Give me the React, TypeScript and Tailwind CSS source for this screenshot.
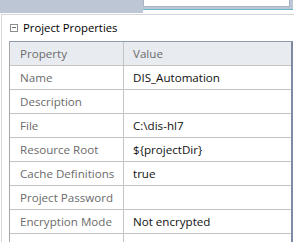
import React from "react";

const rows: [string, string][] = [
  ["Name", "DIS_Automation"],
  ["Description", ""],
  ["File", "C:\\dis-hl7"],
  ["Resource Root", "${projectDir}"],
  ["Cache Definitions", "true"],
  ["Project Password", ""],
  ["Encryption Mode", "Not encrypted"],
  ["Compression Options", ""],
];

export default function App() {
  return (
    <div
      className="w-[296px] h-[242px] bg-white overflow-hidden"
      style={{ fontFamily: '"Open Sans", "Noto Sans", sans-serif' }}
    >
      {/* top strip */}
      <div className="flex h-[13px]">
        <div className="w-[143px] bg-[#bcc6d4]" />
        <div className="w-[150px] flex flex-col">
          <div className="h-[9px] bg-[#bcc6d4] flex">
            <div className="h-[7px] flex-1 bg-white border border-t-0 border-[#a9b5c7] mr-[3px]" />
          </div>
          <div className="h-px bg-[#6bb9cc]" />
        </div>
      </div>
      {/* panel */}
      <div className="mt-px w-[293px] h-[230px] border-t border-l border-[#d6d6d6] ml-[1px]">
        <div className="flex items-center h-[26px] pl-[8px] gap-[5px] pb-[1px]">
          <div className="w-[8px] h-[8px] border border-[#8d8d8d] flex items-center justify-center">
            <div className="w-[4px] h-px bg-[#6d6d6d]" />
          </div>
          <span className="text-[11.3px] text-black leading-none">Project Properties</span>
        </div>
        <div className="ml-[7px] w-[284px] border-l border-[#a7a7a7] border-r-2 border-r-[#7f8ba0] border-t border-t-[#8f9bb0]">
          <div className="flex h-[24px] bg-[#e8ebf0] border-b border-[#c4c4c4] text-[11.6px] text-[#6b6b6b]">
            <div className="w-[114px] pl-[10px] flex items-center border-r border-[#c4c4c4]">Property</div>
            <div className="flex-1 pl-[9px] flex items-center">Value</div>
          </div>
          {rows.map(([k, v]) => (
            <div key={k} className="flex h-[24px] border-b border-[#c4c4c4] text-[11.6px]">
              <div className="w-[114px] pl-[10px] flex items-center border-r border-[#c4c4c4] text-[#6b6b6b] whitespace-nowrap overflow-hidden">
                {k}
              </div>
              <div className="flex-1 pl-[9px] flex items-center text-[#111] whitespace-nowrap">{v}</div>
            </div>
          ))}
        </div>
      </div>
    </div>
  );
}
